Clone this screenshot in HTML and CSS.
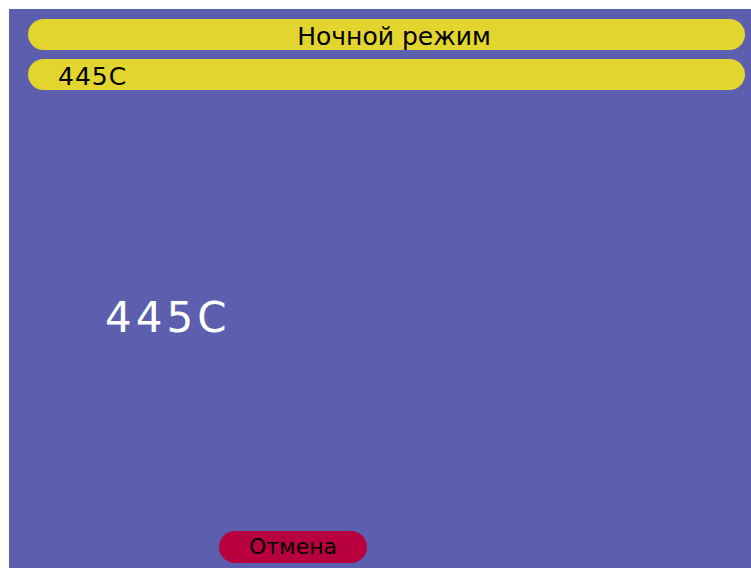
FILE: index.html
```html
<!DOCTYPE html>
<html lang="ru">
<head>
<meta charset="utf-8">
<title>Ночной режим</title>
<link rel="stylesheet" href="styles.css">
</head>
<body>
<main class="screen">
  <div class="bar bar-title">Ночной режим</div>
  <div class="bar bar-value">445C</div>
  <div class="readout"><span class="readout-value">445C</span></div>
  <div class="actions"><button class="btn-cancel" type="button">Отмена</button></div>
</main>
</body>
</html>
```
FILE: styles.css
```css
html, body {
  height: 100%;
}

body {
  margin: 0;
  padding: 9px 0 0 9px;
  box-sizing: border-box;
  background: #ffffff;
  font-family: "DejaVu Sans", Verdana, sans-serif;
  overflow: hidden;
}

.screen {
  height: 100%;
  box-sizing: border-box;
  background: #5b5fae;
  display: flex;
  flex-direction: column;
  gap: 9px;
  padding: 10px 6px 5px 19px;
}

.bar {
  height: 31px;
  box-sizing: border-box;
  padding-top: 4px;
  border-radius: 16px;
  background: #e2d52e;
  color: #000;
  font-size: 25px;
  line-height: 27px;
  white-space: nowrap;
  flex: none;
}

.bar-title {
  text-align: center;
  padding-left: 15px;
}

.bar-value {
  padding-left: 30px;
  letter-spacing: 1px;
}

.readout {
  flex: 1;
  display: flex;
  align-items: center;
  padding-top: 14px;
  padding-left: 77px;
}

.readout-value {
  color: #fff;
  font-size: 42px;
  letter-spacing: 4px;
}

.actions {
  display: flex;
  padding-left: 191px;
}

.btn-cancel {
  width: 148px;
  height: 32px;
  border: none;
  border-radius: 16px;
  background: #b9003f;
  color: #000;
  font-family: inherit;
  font-size: 22px;
  padding: 0 0 1px;
  cursor: pointer;
}
```
